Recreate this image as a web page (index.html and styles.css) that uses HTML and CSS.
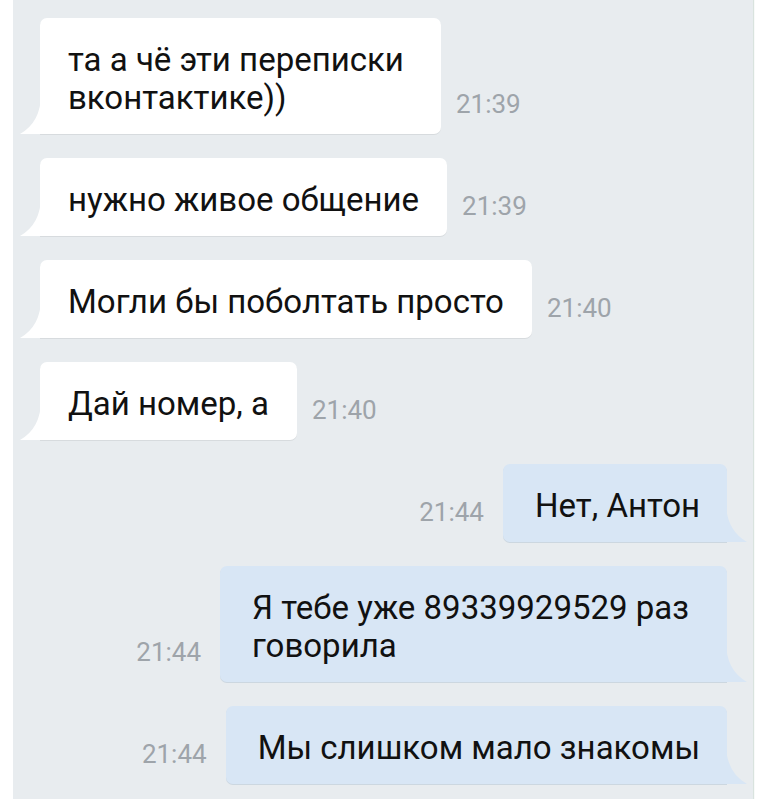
FILE: index.html
```html
<!DOCTYPE html>
<html lang="ru">
<head>
<meta charset="utf-8">
<title>Чат</title>
<link rel="stylesheet" href="styles.css">
</head>
<body>
<div class="chat">
  <div class="msg in">
    <div class="bubble multi">та а чё эти переписки<br>вконтактике))<svg class="tail" viewBox="0 0 21 40"><path d="M21 0 Q21 28 0 40 L21 40 Z"/></svg></div>
    <span class="time">21:39</span>
  </div>
  <div class="msg in">
    <div class="bubble">нужно живое общение<svg class="tail" viewBox="0 0 21 40"><path d="M21 0 Q21 28 0 40 L21 40 Z"/></svg></div>
    <span class="time">21:39</span>
  </div>
  <div class="msg in">
    <div class="bubble">Могли бы поболтать просто<svg class="tail" viewBox="0 0 21 40"><path d="M21 0 Q21 28 0 40 L21 40 Z"/></svg></div>
    <span class="time">21:40</span>
  </div>
  <div class="msg in">
    <div class="bubble">Дай номер, а<svg class="tail" viewBox="0 0 21 40"><path d="M21 0 Q21 28 0 40 L21 40 Z"/></svg></div>
    <span class="time">21:40</span>
  </div>
  <div class="msg out">
    <span class="time">21:44</span>
    <div class="bubble">Нет, Антон<svg class="tail" viewBox="0 0 21 40"><path d="M0 0 Q0 28 21 40 L0 40 Z"/></svg></div>
  </div>
  <div class="msg out">
    <span class="time">21:44</span>
    <div class="bubble multi">Я тебе уже 89339929529 раз<br>говорила<svg class="tail" viewBox="0 0 21 40"><path d="M0 0 Q0 28 21 40 L0 40 Z"/></svg></div>
  </div>
  <div class="msg out">
    <span class="time">21:44</span>
    <div class="bubble">Мы слишком мало знакомы<svg class="tail" viewBox="0 0 21 40"><path d="M0 0 Q0 28 21 40 L0 40 Z"/></svg></div>
  </div>
</div>
</body>
</html>
```
FILE: styles.css
```css
html, body {
  margin: 0;
  padding: 0;
  background: #ffffff;
}
body {
  font-family: Roboto, "Noto Sans", sans-serif;
  height: 799px;
  overflow: hidden;
}
.chat {
  margin-left: 13px;
  width: 740px;
  height: 799px;
  box-sizing: border-box;
  background: #e8ecef;
  padding-top: 18px;
  display: flex;
  flex-direction: column;
  gap: 24px;
  box-shadow: 1px 0 1px rgba(180, 200, 190, 0.5);
}
.msg {
  display: flex;
  align-items: flex-end;
  gap: 15px;
}
.msg.in {
  padding-left: 27px;
}
.msg.out {
  justify-content: flex-end;
  padding-right: 26px;
  gap: 19px;
}
.bubble {
  position: relative;
  background: #ffffff;
  color: #111111;
  font-size: 33px;
  line-height: 38px;
  padding: 23px 28px 17px;
  border-radius: 7px;
  box-shadow: 0 1px 0 rgba(0, 0, 0, 0.07);
}
.msg.in .bubble {
  border-bottom-left-radius: 0;
}
.msg.in .bubble.multi {
  padding-right: 37px;
}
.msg.out .bubble {
  background: #d8e6f5;
  padding-left: 32px;
  padding-right: 27px;
  border-bottom-right-radius: 0;
  box-shadow: 0 1px 0 rgba(120, 150, 180, 0.25);
}
.msg.out .bubble.multi {
  padding-right: 38px;
}
.tail {
  position: absolute;
  bottom: 0;
  width: 21px;
  height: 40px;
}
.msg.in .tail {
  left: -20px;
  fill: #ffffff;
}
.msg.out .tail {
  right: -20px;
  fill: #d8e6f5;
}
.time {
  color: #9ea4aa;
  font-size: 26px;
  line-height: 26px;
  margin-bottom: 17px;
}
```
